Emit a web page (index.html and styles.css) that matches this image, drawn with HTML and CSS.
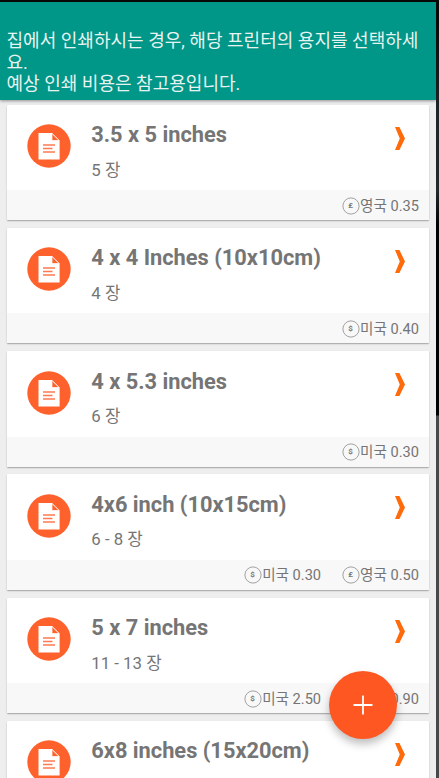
FILE: index.html
```
<!DOCTYPE html>
<html lang="ko">
<head>
<meta charset="utf-8">
<title>용지 선택</title>
<link rel="stylesheet" href="styles.css">
</head>
<body>
<svg class="defs" aria-hidden="true">
  <symbol id="doc" viewBox="0 0 44 44">
    <circle cx="22" cy="22" r="21.7" fill="#ff612c"/>
    <path d="M11.5 9H25l7.6 7.5v19H11.5z" fill="#fff"/>
    <path d="M25 9.5v7h7z" fill="#ff612c" stroke="#fff" stroke-width=".7"/>
    <path d="M16 21h12M16 24.5h9.5M16 28h12" stroke="#ff7950" stroke-width="1.3"/>
  </symbol>
  <symbol id="next" viewBox="0 0 10 23">
    <path d="M0 0h4.4L10 11.5 4.4 23H0l4.8-11.5z" fill="#ff6a0a"/>
  </symbol>
  <symbol id="coin" viewBox="0 0 18 18">
    <circle cx="9" cy="9" r="8.1" fill="none" stroke="#999" stroke-width=".9"/>
  </symbol>
</svg>
<div class="app">
  <header class="notice">
    <p>집에서 인쇄하시는 경우, 해당 프린터의 용지를 선택하세<br>요.</p>
    <p>예상 인쇄 비용은 참고용입니다.</p>
  </header>
  <main class="list">
    <article class="card">
      <div class="body"><svg class="doc"><use href="#doc"/></svg><div class="info"><h2>3.5 x 5 inches</h2><p>5 장</p></div><svg class="next"><use href="#next"/></svg></div>
      <footer><span class="price"><i class="coin"><svg><use href="#coin"/></svg><b>£</b></i>영국 0.35</span></footer>
    </article>
    <article class="card">
      <div class="body"><svg class="doc"><use href="#doc"/></svg><div class="info"><h2>4 x 4 Inches (10x10cm)</h2><p>4 장</p></div><svg class="next"><use href="#next"/></svg></div>
      <footer><span class="price"><i class="coin"><svg><use href="#coin"/></svg><b>$</b></i>미국 0.40</span></footer>
    </article>
    <article class="card">
      <div class="body"><svg class="doc"><use href="#doc"/></svg><div class="info"><h2>4 x 5.3 inches</h2><p>6 장</p></div><svg class="next"><use href="#next"/></svg></div>
      <footer><span class="price"><i class="coin"><svg><use href="#coin"/></svg><b>$</b></i>미국 0.30</span></footer>
    </article>
    <article class="card">
      <div class="body"><svg class="doc"><use href="#doc"/></svg><div class="info"><h2>4x6 inch (10x15cm)</h2><p>6 - 8 장</p></div><svg class="next"><use href="#next"/></svg></div>
      <footer><span class="price"><i class="coin"><svg><use href="#coin"/></svg><b>$</b></i>미국 0.30</span><span class="price"><i class="coin"><svg><use href="#coin"/></svg><b>£</b></i>영국 0.50</span></footer>
    </article>
    <article class="card">
      <div class="body"><svg class="doc"><use href="#doc"/></svg><div class="info"><h2>5 x 7 inches</h2><p>11 - 13 장</p></div><svg class="next"><use href="#next"/></svg></div>
      <footer><span class="price"><i class="coin"><svg><use href="#coin"/></svg><b>$</b></i>미국 2.50</span><span class="price"><i class="coin"><svg><use href="#coin"/></svg><b>£</b></i>영국 0.90</span></footer>
    </article>
    <article class="card">
      <div class="body"><svg class="doc"><use href="#doc"/></svg><div class="info"><h2>6x8 inches (15x20cm)</h2></div><svg class="next"><use href="#next"/></svg></div>
    </article>
  </main>
</div>
<button class="fab" aria-label="추가"><svg viewBox="0 0 20 20"><path d="M10 .5v19M.5 10h19" stroke="#fff" stroke-width="1.8"/></svg></button>
</body>
</html>
```
FILE: styles.css
```
* { box-sizing: border-box; }
html, body { height: 100%; overflow: hidden; }
body {
  margin: 0;
  padding: 2px 3px 0 0;
  background: linear-gradient(#080808 0, #080808 20px, #202326 110px, #24282a 190px, #000 225px, #000 415px, #484848 416px, #484848 100%);
  font-family: Roboto, "Noto Sans CJK KR", sans-serif;
  color: #757575;
}
h2, p { margin: 0; }
.defs { position: absolute; width: 0; height: 0; }
.app { height: 776px; overflow: hidden; background: #eee; }

.notice {
  position: relative;
  height: 98px;
  padding: 28px 7px 0 6.5px;
  background: #009688;
  box-shadow: 0 1px 3px rgba(0, 0, 0, .4);
  color: #e8f3f1;
  font-size: 18.05px;
  line-height: 21.5px;
  white-space: nowrap;
}

.list {
  display: flex;
  flex-direction: column;
  gap: 7.8px;
  padding: 4.5px 7.5px 0 7px;
}
.card {
  flex: none;
  height: 115.5px;
  background: #fff;
  border-radius: 1px;
  box-shadow: 0 1px 1.5px rgba(0, 0, 0, .32);
}
.body {
  display: flex;
  align-items: flex-start;
  height: 85.5px;
  padding: 19.5px 23.5px 0 20.3px;
}
.doc { flex: none; width: 44px; height: 44px; }
.info { flex: 1; padding-left: 20px; }
.info h2 {
  font-size: 21.8px;
  font-weight: 700;
  line-height: 26px;
  margin-top: -2px;
  white-space: nowrap;
}
.info p { font-size: 16.8px; line-height: 24px; margin-top: 9.5px; }
.next { flex: none; width: 10px; height: 23px; margin-top: 2.5px; }

.card footer {
  display: flex;
  justify-content: flex-end;
  align-items: center;
  gap: 20.5px;
  height: 30px;
  padding: 1px 9.5px 0 0;
  background: #f8f8f8;
  font-size: 14.6px;
}
.price { display: flex; align-items: center; gap: .5px; line-height: 20px; }
.coin { display: grid; place-items: center; width: 18px; height: 18px; font-style: normal; }
.coin > * { grid-area: 1 / 1; }
.coin svg { width: 18px; height: 18px; }
.coin b { font-size: 8px; line-height: 18px; color: #777; }

.fab {
  position: absolute;
  left: 329px;
  top: 671px;
  display: grid;
  place-items: center;
  width: 68px;
  height: 68px;
  padding: 0;
  border: 0;
  border-radius: 50%;
  background: #ff5722;
  box-shadow: 0 5px 9px rgba(0, 0, 0, .26);
}
.fab svg { width: 20px; height: 20px; }
```
